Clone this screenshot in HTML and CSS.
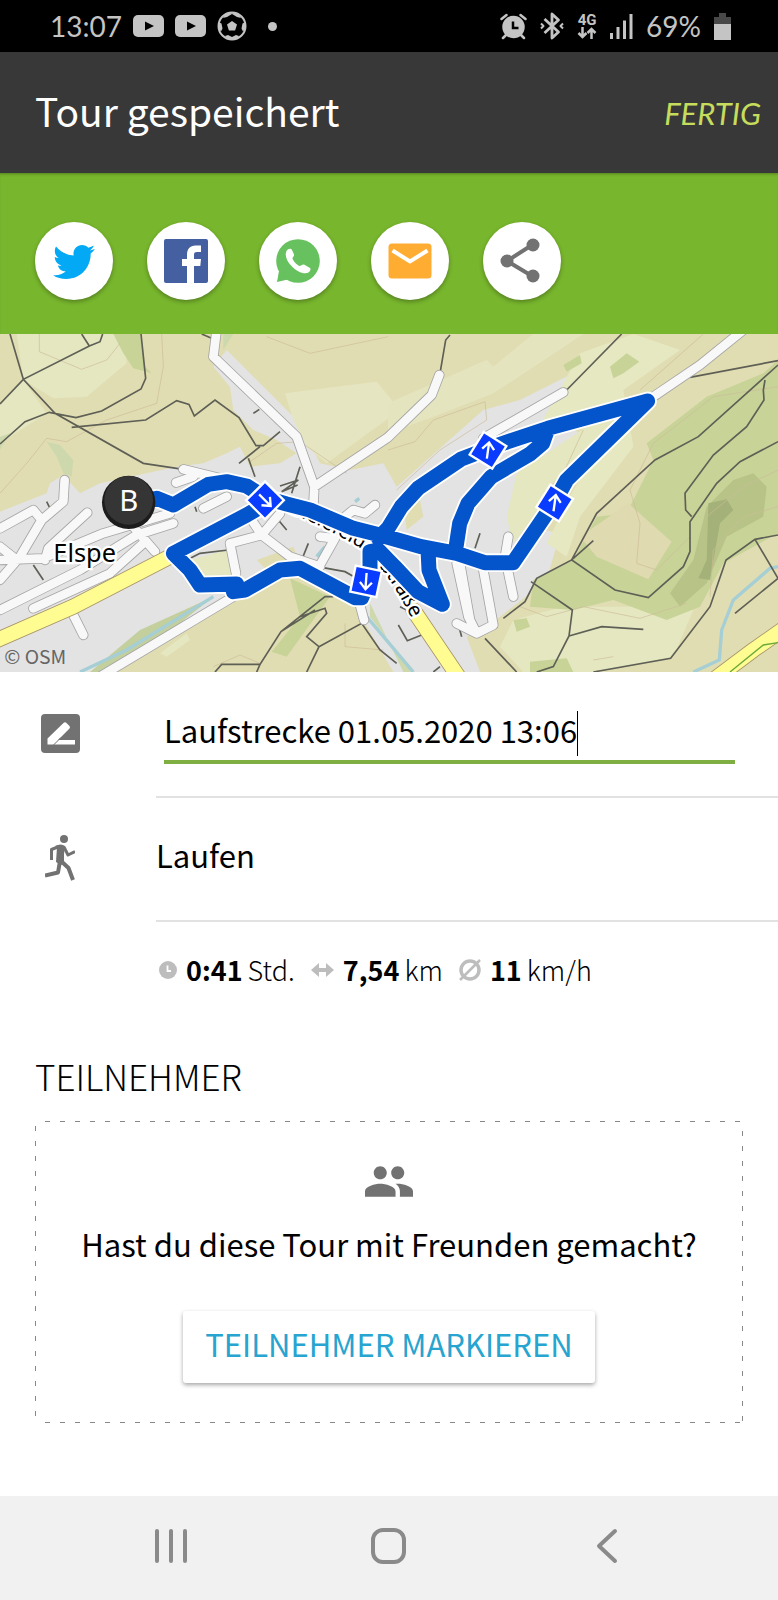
FILE: index.html
```html
<!DOCTYPE html>
<html lang="de">
<head>
    <meta charset="UTF-8">
    <meta name="viewport" content="width=device-width, initial-scale=1.0">
    <title>Tour gespeichert</title>
    <link rel="stylesheet" href="styles.css">
</head>
<body>
    <div class="status-bar">
        <div class="status-group">
            <span class="status-text">13:07</span>
            <svg class="icon-video" viewBox="0 0 31 22"><rect width="31" height="22" rx="5" fill="#c4c4c4"/><path d="M12 6.500l9 4.500-9 4.500z" fill="#000"/></svg>
            <svg class="icon-video" viewBox="0 0 31 22"><rect width="31" height="22" rx="5" fill="#c4c4c4"/><path d="M12 6.500l9 4.500-9 4.500z" fill="#000"/></svg>
            <svg class="icon-ball" viewBox="0 0 30 30">
                <circle cx="15" cy="15" r="13.500" fill="none" stroke="#c4c4c4" stroke-width="2"/>
                <path fill="#c4c4c4" d="M15 10l5 3.600-1.900 5.900h-6.200L10 13.600zM8 3l6-2 1 2-5 3-4 1zM22 3l-6-2-1 2 5 3 4 1zM1.500 11l3 1.500 1 5-1.500 3-2.500-3zM28.500 11l-3 1.500-1 5 1.500 3 2.500-3zM8 25l3-1 4 2 4-2 3 1-2 3-5 1-5-1z"/>
            </svg>
            <span class="status-dot"></span>
        </div>
        <div class="status-group status-right">
            <svg class="icon-alarm" viewBox="0 0 27 27" fill="none" stroke="#c4c4c4" stroke-width="2.500" stroke-linecap="round">
                <circle cx="13.500" cy="14" r="10" fill="#c4c4c4"/>
                <path d="M1.500 6l5-4M25.500 6l-5-4M6 22l-3 3M21 22l3 3"/>
                <path d="M13 8.500v6.500h5.500" stroke="#000" stroke-linecap="butt"/>
            </svg>
            <svg class="icon-bluetooth" viewBox="0 0 24 28" fill="none" stroke="#c4c4c4" stroke-width="2.800" stroke-linejoin="round">
                <path d="M4.500 7l14 13-6.500 6V2l6.500 6-14 13"/>
                <path d="M1 11.500l2.500 2.500-2.500 2.500M23 11.500l-2.500 2.500 2.500 2.500" stroke-width="2"/>
            </svg>
            <div class="network">
                <span>4G</span>
                <svg viewBox="0 0 20 12" fill="none" stroke="#c4c4c4" stroke-width="2.500"><path d="M5.500 0v10M1.500 6l4 4 4-4M14.500 12V2M10.500 6l4-4 4 4"/></svg>
            </div>
            <svg class="icon-signal" viewBox="0 0 23 25" fill="#c4c4c4"><path d="M0 19h3v6H0zM6.500 13h3v12h-3zM13 6.500h3V25h-3zM19.500 0h3v25h-3z"/></svg>
            <span class="status-text">69%</span>
            <svg class="icon-battery" viewBox="0 0 17 27"><path d="M5 0h7v4h5v7H0V4h5z" fill="#484848"/><path d="M0 11h17v16H0z" fill="#c4c4c4"/></svg>
        </div>
    </div>

    <header class="app-bar">
        <h1>Tour gespeichert</h1>
        <button class="done-button">FERTIG</button>
    </header>

    <div class="share-bar">
        <button class="share-button" aria-label="Twitter">
            <svg viewBox="0 0 24 24" fill="#03a9f4"><path d="M22.460 6c-.77.35-1.600.58-2.460.69.88-.53 1.560-1.370 1.880-2.380-.83.5-1.750.85-2.720 1.050C18.370 4.500 17.260 4 16 4c-2.350 0-4.270 1.920-4.270 4.290 0 .34.04.67.11.98C8.280 9.090 5.110 7.380 3 4.790c-.37.63-.58 1.370-.58 2.150 0 1.490.75 2.810 1.910 3.560-.71 0-1.370-.2-1.950-.5v.03c0 2.080 1.480 3.820 3.440 4.210a4.220 4.220 0 0 1-1.930.07 4.280 4.280 0 0 0 4 2.980 8.521 8.521 0 0 1-5.330 1.840c-.34 0-.68-.02-1.020-.06C3.440 20.290 5.700 21 8.120 21 16 21 20.330 14.460 20.330 8.790c0-.19 0-.37-.01-.56.84-.6 1.560-1.360 2.140-2.230z"/></svg>
        </button>
        <button class="share-button" aria-label="Facebook">
            <svg viewBox="0 0 48 48"><rect x="2" y="2" width="44" height="44" rx="2" fill="#4460a0"/><path fill="#fff" d="M25 46V29h-5v-7h5v-4c0-6 3-9.500 8.500-9.500H39v6.500h-4c-2.500 0-3 1-3 3v4h7l-.7 7H32v17z"/></svg>
        </button>
        <button class="share-button" aria-label="WhatsApp">
            <svg viewBox="0 0 48 48"><circle cx="24" cy="24" r="21.800" fill="#67c15e"/><path d="M5 34L3 45l13-3z" fill="#67c15e"/><path fill="#fff" d="M18 13c-1-2-4-1.500-5.500 1-2 4 0 10 5 15 5 5.500 13 9 17 6.500 2-1.500 2.500-3.500 1.500-4.500l-6-3.500c-1.500-.5-3 1.500-4.500 1.500-2.500-1-6-4.500-7-7.500 0-1.500 2-2.500 1.500-4z"/></svg>
        </button>
        <button class="share-button" aria-label="E-Mail">
            <svg viewBox="0 0 48 48"><rect x="2.500" y="6.500" width="43" height="35" rx="3.500" fill="#ffac33"/><path d="M6.500 13.500L24 24.500l17.500-11" fill="none" stroke="#fff" stroke-width="4"/></svg>
        </button>
        <button class="share-button" aria-label="Teilen">
            <svg viewBox="0 0 48 48" fill="#727272"><path d="M34 8L9 24l25 15" fill="none" stroke="#727272" stroke-width="4"/><circle cx="9" cy="24" r="6.500"/><circle cx="35" cy="8" r="6.500"/><circle cx="35" cy="39" r="6.500"/></svg>
        </button>
    </div>

    <svg class="map" viewBox="0 12 2334 1014" role="img" aria-label="Karte der Tour">
        <defs>
            <path id="roads" d="M650 0L640 80L890 320L943 470L940 530M943 470L1164 322L1295 195L1318 135M1450 325L1690 187M1960 200L2100 105L2230 0M194 450L190 515L125 570L60 680L0 750M0 595L100 540L125 570M262 548L145 655L135 690M0 690L130 685L310 610L510 550M0 840L240 720L410 615L520 580M100 835L330 730L430 640M400 590L465 665M0 650L50 690M210 835L250 915M550 418L660 445M528 458L580 440M610 535L680 500M745 555L785 615L870 680L960 710M785 615L840 550M785 615L690 640L708 730M960 705L1005 625L960 620M1035 560L1060 540L1095 550L1125 525M1080 825L1092 870M300 1040L700 800M1370 700L1405 860L1430 910L1480 885L1450 720M1370 880L1430 910M1525 620L1515 680L1540 800M1380 700L1410 870"/>
            <path id="route" d="M440 510L470 505L520 525L625 463L680 455L740 468L800 505L860 522L930 540L1060 595L1140 615L1264 650L1370 670L1454 698L1539 698L1664 515L1700 450L1943 213L1644 295L1494 345L1384 387L1254 475L1204 530L1164 595L1135 625M1644 295L1628 340L1590 372L1474 440L1404 520L1379 580L1366 665M1284 660L1287 720L1327 823L1254 785L1184 710L1135 660L1110 665L1110 740L1085 803L1065 803L900 715L840 720L735 780L700 785L710 762L600 765L570 720L520 670L740 555L800 520"/>
            <rect id="marker" x="-40" y="-40" width="80" height="80" fill="#0a3cff" stroke="#fff" stroke-width="7"/>
            <path id="arrow" d="M0 25V-22M-18 -3L0 -24L18 -3" fill="none" stroke="#fff" stroke-width="7"/>
        </defs>

        <rect y="12" width="2334" height="1014" fill="#e1ddb3"/>

        <!-- built-up area -->
        <path fill="#e3e3e4" d="M0 545L140 490L150 460L190 435L240 490L300 460L530 410L610 400L680 370L720 350L750 410L840 400L890 370L830 330L760 300L700 240L690 170L640 110L680 60L900 280L960 400L1050 420L1150 400L1190 470L1450 240L1560 210L1720 130L1730 180L1640 280L1750 310L1640 440L1540 480L1530 580L1680 610L1640 750L1500 860L1400 920L1440 1026L1180 1026L1060 820L900 700L760 740L700 810L330 1026L0 1026z"/>

        <!-- meadows and fields -->
        <path fill="#e4e7c0" d="M50 12L370 12L380 100L260 200L160 205L70 150L0 220V340L140 250L70 150z"/>
        <path fill="#e5e6c1" d="M855 190L1130 155L1200 240L980 400L920 350L880 270z"/>
        <path fill="#e4e5bf" d="M1164 220L1460 90L1480 110L1600 12H1750L1480 190L1300 260L1164 310z"/>
        <path fill="#e6e8c1" d="M1740 70L1900 12L2040 60L1870 180L1900 350L1740 560L1700 680L1640 640L1720 480L1880 240L1600 320z"/>
        <path fill="#e4e7c0" d="M1550 430L1760 290L1860 260L1700 440L1650 500L1540 640L1520 560z"/>
        <path fill="#e4e7c0" d="M570 690L680 660L695 735L610 750zM480 970L560 910L570 930L500 980z"/>
        <path fill="#e4e7c0" d="M1540 870L1690 830L1900 830L2080 840L2020 980L1800 1026L1570 1026L1500 950z"/>
        <path fill="#e1ddb3" d="M770 690L880 650L900 700L820 740zM1210 520L1260 510L1270 560L1220 600z"/>

        <!-- woods -->
        <path fill="#c8d398" d="M2334 90L2290 130L2120 200L1940 340L1960 390L1880 550L1790 560L1720 690L1600 750L1590 830L1720 840L1840 810L2000 870L2100 830L2170 700L2334 610z"/>
        <path fill="#dfdab0" d="M1885 520L2015 635L1945 748L1790 680L1740 620z"/>
        <path fill="#b8c487" d="M2120 530L2200 450L2260 430L2300 470L2290 560L2180 620L2120 760L2040 830L2010 790L2080 690z"/>
        <path fill="#a4b179" d="M2125 520L2180 508L2200 540L2160 580L2130 750L2095 745L2120 690z"/>
        <path fill="#c8d398" d="M340 12L420 12L435 110L455 130L400 115L370 70zM870 745L990 800L860 980L815 965L900 860zM1690 105L1740 75L1745 100L1700 125zM1830 110L1880 70L1918 95L1870 130L1840 145zM1590 995L1700 985L1720 1026H1590zM1540 870L1580 865L1590 890L1550 905z"/>
        <path fill="#cdd9ac" d="M140 335L180 345L220 390L215 440L190 430L170 380zM0 320L30 310L0 360zM670 12L700 12L670 60zM1110 820L1210 1026H1240L1110 860z"/>
        <path fill="#c3cf9d" d="M640 800L420 900L270 1026H320L450 950z"/>

        <!-- contour lines -->
        <path fill="none" stroke="#cdbb98" stroke-width="2" d="M118 12V65L245 118L320 90L360 40M485 12L490 110L470 220L320 270L200 335L140 325L80 400L0 490M800 20L930 70L1164 20M750 395L830 340L900 335L1040 430M1164 360L1245 335L1300 270L1455 215L1460 270L1320 360L1190 480M1750 300L1690 430L1630 490M1780 990L1840 980M2334 170L2140 200L1960 340L1890 480L1920 580L1910 700L1970 720L2070 620M1560 830L1640 860L1750 830L1920 865L2060 820M2130 800L2140 660L2230 560L2334 530M2120 560L2230 470L2334 420M640 1010L720 975L780 1000M1035 880V950L1150 960M2110 12L1920 180"/>

        <!-- water -->
        <path fill="none" stroke="#a5ced5" stroke-width="10" d="M240 1026L380 960L640 800M1100 860L1240 1026M2080 1026L2158 990L2165 900L2200 810L2310 715L2334 710M975 650L950 680M1065 515L1078 505"/>

        <!-- tracks and paths -->
        <path class="track" d="M30 12L70 148L165 250L430 400L550 418M0 222L70 148L268 48L300 35L308 12M245 12L268 48M0 342L75 275L148 247L228 263L305 243L423 177L437 145L423 12M215 292L437 270L530 212L567 223L583 258L645 210L717 263L768 347L790 347L840 305M717 400L780 350M745 385L765 440M760 250L778 238M605 12L635 25M140 515L150 535M585 530L590 545M900 410L875 490M840 468L895 450L845 485L893 465M835 570L860 600M925 640L905 690M565 688L600 670L685 660M965 712L1035 725L1070 745M100 705L130 750M1220 840L1200 830"/>
        <path class="track" d="M1350 15L1337 30L1320 130M1865 12L1700 180M2070 142L2334 92M2334 105L2095 320L1965 390L1790 550L1715 690L1610 745L1575 815L1510 865M1780 632L1715 690L1845 780L1945 803L2050 710L2070 665V575L2150 460L2220 395L2334 335M2295 150L2290 180L2292 210L2240 290L2140 375L2055 490L2057 540L2075 560M2334 615L2265 628L2178 690L2130 830L2012 985L1780 1026M2265 628L2334 745L2205 850M1593 755L1717 840L1707 918L1660 1010L1610 1026M1707 918L1805 890L1930 898M1455 925L1550 1026M1440 610L1425 655M1195 885L1222 932L1265 915M1385 920L1378 895M645 1026L665 1003H780L843 905L945 840M780 1003L770 1026M843 905L975 800H1000M900 860L975 835L980 850L920 920L957 950L920 1026M957 950L1085 880L1140 960L1190 1000M1300 1026L1320 1010"/>

        <!-- roads -->
        <use href="#roads" class="road-casing"/>
        <use href="#roads" class="road-fill"/>
        <path class="main-casing" d="M-20 935L220 830L510 680M1240 840L1375 1040M2140 1050L2260 960L2360 890"/>
        <path class="main-fill" d="M-20 935L220 830L510 680M1240 840L1375 1040M2140 1050L2260 960L2360 890"/>
        <path fill="none" stroke="#6ba839" stroke-width="4" d="M2190 1026L2290 945L2334 938"/>

        <!-- street name along the main road -->
        <path id="street" d="M700 505L870 548Q980 595 1065 645T1235 865" fill="none"/>
        <text class="street-label"><textPath href="#street" startOffset="100%">Bielefelder Straße</textPath></text>

        <use href="#route" class="route-casing"/>
        <use href="#route" class="route-fill"/>

        <g transform="translate(795 511) rotate(45)"><use href="#marker"/></g>
        <g transform="translate(795 511) rotate(135)"><use href="#arrow"/></g>
        <g transform="translate(1098 754) rotate(12)"><use href="#marker"/></g>
        <g transform="translate(1098 754) rotate(184)"><use href="#arrow"/></g>
        <g transform="translate(1464 361) rotate(32)"><use href="#marker"/></g>
        <g transform="translate(1464 361) rotate(8)"><use href="#arrow"/></g>
        <g transform="translate(1664 519) rotate(32)"><use href="#marker"/></g>
        <g transform="translate(1664 519) rotate(8)"><use href="#arrow"/></g>

        <circle cx="386" cy="517" r="80" fill="#1c1c1c"/>
        <circle cx="386" cy="511" r="73" fill="#353535"/>
        <text class="map-pin" x="386" y="543">B</text>
        <text class="map-place" x="160" y="696">Elspe</text>
        <text class="map-credit" x="13" y="1003">© OSM</text>
    </svg>

    <main>
        <div class="row row-name">
            <div class="row-icon">
                <svg class="icon-edit" viewBox="0 0 39 39"><rect width="39" height="39" rx="4" fill="#727272"/><path fill="#fff" d="M6.500 30.500v-6l16-15.500a2 2 0 0 1 3 0l3 3a2 2 0 0 1 0 2.500L17 26h17v4.500z"/><path d="M12.500 31L20 23.500" stroke="#727272" stroke-width="1"/></svg>
            </div>
            <div class="row-body">
                <label class="name-field">
                    <input class="name-input" type="text" value="Laufstrecke 01.05.2020 13:06" aria-label="Name der Tour">
                    <span class="caret"></span>
                </label>
            </div>
        </div>
        <div class="row">
            <div class="row-icon">
                <svg class="icon-run" viewBox="0 0 30 46" fill="none" stroke="#727272" stroke-width="3" stroke-linejoin="round">
                    <circle cx="19" cy="4" r="4" fill="#727272" stroke="none"/>
                    <path fill="#727272" stroke="none" d="M10 11q6-3 10 0l-1 8v9l-3 2-5-3 1-15z"/>
                    <path d="M14 11.500L6.500 14.500V25M19 12l4 8 7-3.500"/>
                    <path stroke-width="4" d="M15 26l-2 11.500L0 40.500M16 26l7.500 7L28 45"/>
                </svg>
            </div>
            <div class="row-body"><span class="sport">Laufen</span></div>
        </div>

        <div class="stats">
            <span class="stat">
                <svg class="icon-clock" viewBox="0 0 18 18"><circle cx="9" cy="9" r="9" fill="#bdbdbd"/><path d="M8.500 4.500V10H12" fill="none" stroke="#fff" stroke-width="1.800"/></svg>
                <b>0:41</b>
                <span>Std.</span>
            </span>
            <span class="stat">
                <svg class="icon-distance" viewBox="0 0 23 14" fill="#bdbdbd"><path d="M0 7l8-7v5h7V0l8 7-8 7V9H8v5z"/></svg>
                <b>7,54</b>
                <span>km</span>
            </span>
            <span class="stat">
                <svg class="icon-average" viewBox="0 0 22 22" fill="none" stroke="#bdbdbd"><circle cx="11" cy="11" r="9" stroke-width="3.500"/><path d="M1 21L21 1" stroke-width="2.500"/></svg>
                <b>11</b>
                <span>km/h</span>
            </span>
        </div>

        <section class="participants">
            <h2>TEILNEHMER</h2>
            <div class="participants-box">
                <svg class="icon-people" viewBox="1 5 22 14" fill="#727272"><path d="M16 11c1.660 0 2.990-1.340 2.990-3S17.660 5 16 5s-3 1.340-3 3 1.340 3 3 3zm-8 0c1.660 0 2.990-1.340 2.990-3S9.660 5 8 5 5 6.340 5 8s1.340 3 3 3zm0 2c-2.330 0-7 1.170-7 3.500V19h14v-2.500c0-2.330-4.670-3.500-7-3.500zm8 0c-.29 0-.62.02-.97.05 1.160.84 1.970 1.970 1.970 3.450V19h6v-2.500c0-2.330-4.670-3.500-7-3.500z"/></svg>
                <p>Hast du diese Tour mit Freunden gemacht?</p>
                <button class="tag-button">TEILNEHMER MARKIEREN</button>
            </div>
        </section>
    </main>

    <nav class="nav-bar">
        <button aria-label="Letzte Apps">
            <svg viewBox="0 0 38 38"><path d="M5 4v30M19 4v30M33 4v30"/></svg>
        </button>
        <button aria-label="Startseite">
            <svg viewBox="0 0 38 38"><rect x="3" y="3" width="31" height="32" rx="10"/></svg>
        </button>
        <button aria-label="Zurück">
            <svg viewBox="0 0 38 38"><path d="M27 4L11 19l16 15"/></svg>
        </button>
    </nav>
</body>
</html>
```

FILE: styles.css
```css
* {
    box-sizing: border-box;
}
body {
    display: flex;
    flex-direction: column;
    min-height: 100vh;
    margin: 0;
    background-color: #fff;
    color: #000;
    font-family: "Noto Sans CJK SC", "Noto Sans", sans-serif;
    font-size: 31px;
    line-height: 40px;
}
button {
    padding: 0;
    border: none;
    background-color: transparent;
    font-family: inherit;
    cursor: pointer;
}
svg {
    display: block;
    flex-shrink: 0;
}

/* Status bar */
.status-bar {
    display: flex;
    justify-content: space-between;
    align-items: center;
    height: 52px;
    padding: 0 47px 0 50px;
    background-color: #000;
    color: #c4c4c4;
}
.status-group {
    display: flex;
    align-items: center;
    gap: 11px;
}
.status-right {
    gap: 13px;
}
.status-text {
    font-family: Lato, sans-serif;
    font-size: 28px;
}
.icon-video {
    width: 31px;
    height: 22px;
}
.icon-ball {
    width: 30px;
    height: 30px;
}
.status-dot {
    width: 9px;
    height: 9px;
    margin-left: 10px;
    border-radius: 50%;
    background-color: #c4c4c4;
}
.icon-alarm {
    width: 27px;
    height: 27px;
}
.icon-bluetooth {
    width: 24px;
    height: 28px;
}
.network {
    display: flex;
    flex-direction: column;
    align-items: center;
    font-family: Roboto, sans-serif;
    font-size: 15px;
    font-weight: 700;
    line-height: 14px;
}
.network svg {
    width: 20px;
    height: 12px;
}
.icon-signal {
    width: 23px;
    height: 25px;
}
.icon-battery {
    width: 17px;
    height: 27px;
}

/* Header */
.app-bar {
    display: flex;
    justify-content: space-between;
    align-items: center;
    height: 121px;
    padding: 0 17px 0 35px;
    background-color: #383838;
}
.app-bar h1 {
    margin: 0;
    padding-bottom: 6px;
    color: #fff;
    font-size: 39px;
    font-weight: 400;
}
.done-button {
    color: #c6dc5c;
    font-family: Lato, sans-serif;
    font-size: 31px;
    font-style: italic;
}

/* Share buttons */
.share-bar {
    display: flex;
    gap: 34px;
    padding: 49px 35px 34px;
    background-color: #78b62d;
    box-shadow: inset 0 3px 3px -2px rgba(0, 0, 0, 0.3);
}
.share-button {
    display: flex;
    justify-content: center;
    align-items: center;
    width: 78px;
    height: 78px;
    border-radius: 50%;
    background-color: #fff;
    box-shadow: 0 2px 4px rgba(0, 0, 0, 0.3);
}
.share-button svg {
    width: 48px;
    height: 48px;
}

/* Map */
.map {
    width: 100%;
    height: auto;
}
.track {
    fill: none;
    stroke: #5e5f55;
    stroke-width: 5px;
}
.road-casing, .road-fill, .main-casing, .main-fill, .route-casing, .route-fill {
    fill: none;
    stroke-linecap: round;
    stroke-linejoin: round;
}
.road-casing {
    stroke: #a5a5a5;
    stroke-width: 31px;
}
.road-fill {
    stroke: #f8f8f8;
    stroke-width: 26px;
}
.main-casing {
    stroke: #a89468;
    stroke-width: 48px;
}
.main-fill {
    stroke: #fffc92;
    stroke-width: 43px;
}
.route-casing {
    stroke: #fff;
    stroke-width: 56px;
}
.route-fill {
    stroke: #0455cb;
    stroke-width: 45px;
}
.street-label, .map-place {
    font-family: "Noto Sans", sans-serif;
    paint-order: stroke;
    stroke: #fff;
    stroke-width: 14px;
}
.street-label {
    font-size: 60px;
    text-anchor: end;
}
.map-place {
    font-size: 76px;
}
.map-pin {
    fill: #fff;
    font-family: "Noto Sans", sans-serif;
    font-size: 88px;
    text-anchor: middle;
}
.map-credit {
    fill: #666;
    font-size: 58px;
}

/* Tour details */
.row {
    display: flex;
    height: 124px;
}
.row-name {
    height: 126px;
}
.row-icon {
    display: flex;
    align-items: center;
    width: 156px;
    padding: 0 0 4px 41px;
}
.row-body {
    display: flex;
    align-items: center;
    flex: 1;
    padding-right: 43px;
    border-bottom: 2px solid #e2e2e2;
}
.icon-edit {
    width: 39px;
    height: 39px;
}
.icon-run {
    width: 30px;
    height: 46px;
    margin-left: 4px;
}
.name-field {
    display: flex;
    align-items: center;
    flex: 1;
    margin-left: 8px;
    padding: 6px 0 4px;
    border-bottom: 4px solid #7fae42;
}
.name-input {
    field-sizing: content;
    min-width: 0;
    padding: 0 0 6px;
    border: none;
    outline: none;
    background-color: transparent;
    color: inherit;
    font: inherit;
}
.caret {
    width: 1px;
    height: 45px;
    background-color: #000;
}
.sport {
    padding-bottom: 8px;
}
.stats {
    display: flex;
    gap: 16px;
    padding: 28px 0 34px 159px;
    font-size: 27px;
}
.stat {
    display: flex;
    align-items: center;
    gap: 5px;
}
.stat svg {
    margin-right: 4px;
}
.stat span {
    font-weight: 300;
}
.icon-clock {
    width: 18px;
    height: 18px;
}
.icon-distance {
    width: 23px;
    height: 14px;
}
.icon-average {
    width: 22px;
    height: 22px;
}

/* Participants */
.participants {
    padding: 28px 35px 72px;
}
.participants h2 {
    margin: 0;
    font-size: 35px;
    font-weight: 200;
    line-height: 48px;
}
.participants-box {
    display: flex;
    flex-direction: column;
    align-items: center;
    margin-top: 21px;
    padding: 45px 20px 40px;
    background-image:
        repeating-linear-gradient(90deg, transparent 0 10px, #888 10px 15px),
        repeating-linear-gradient(90deg, transparent 0 10px, #888 10px 15px),
        repeating-linear-gradient(180deg, transparent 0 5px, #888 5px 10px, transparent 10px 15px),
        repeating-linear-gradient(180deg, transparent 0 10px, #888 10px 15px);
    background-position: top, bottom, left, right;
    background-repeat: no-repeat;
    background-size: 100% 1px, 100% 1px, 1px 100%, 1px 100%;
}
.participants-box p {
    margin: 27px 0 47px;
}
.icon-people {
    width: 48px;
    height: 31px;
}
.tag-button {
    padding: 13px 22px 19px;
    border-radius: 3px;
    background-color: #fff;
    box-shadow: 0 2px 4px rgba(0, 0, 0, 0.35);
    color: #27a4cf;
    font-size: 31px;
    line-height: 40px;
}

/* Navigation bar */
.nav-bar {
    display: flex;
    justify-content: space-around;
    align-items: center;
    height: 104px;
    margin-top: auto;
    padding: 0 62px 4px;
    background-color: #f1f1f1;
}
.nav-bar svg {
    width: 38px;
    height: 38px;
    fill: none;
    stroke: #8a8a8a;
    stroke-width: 4px;
    stroke-linecap: round;
    stroke-linejoin: round;
}
```
